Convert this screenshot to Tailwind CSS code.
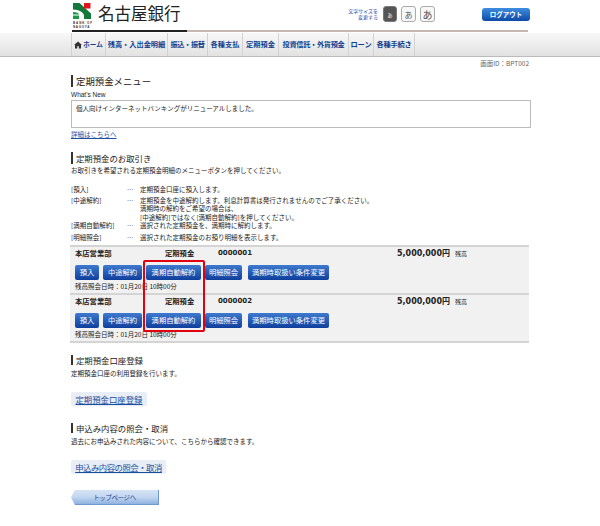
<!DOCTYPE html>
<html lang="ja"><head><meta charset="utf-8">
<script src="https://cdn.jsdelivr.net/npm/@tailwindcss/browser@4"></script>
</head>
<body class="bg-white w-[600px] h-[526px] overflow-hidden font-['Noto_Sans_CJK_JP','Noto_Sans',sans-serif] text-[6.5px] leading-[9px] text-[#222]">
<header class="h-[33px] px-[72px] relative">
  <div class="flex items-start h-[30px]">
    <svg width="19" height="26" viewBox="0 0 19 26" class="mt-[3px] ml-[1px] shrink-0">
      <path d="M0 0h6.5L18 10.5V16h-7v-3.5C10 8.5 6 7 0 6.5z" fill="#12793a"/>
      <path d="M0 9c3 0 5 .7 6 2v5H0z" fill="#1a9a48"/>
      <rect x="0" y="11.5" width="6" height="1" fill="#fff"/>
      <rect x="11" y="0" width="6.5" height="5.5" fill="#e2141f"/>
      <text x="0" y="21" font-size="3" letter-spacing=".9" fill="#333" font-family="Liberation Sans" font-weight="700">BANK OF</text>
      <text x="0" y="25" font-size="3" letter-spacing=".7" fill="#333" font-family="Liberation Sans" font-weight="700">NAGOYA</text>
    </svg>
    <span class="ml-[6px] mt-[3px] text-[16.5px] leading-[20px] text-[#222]">名古屋銀行</span>
    <div class="ml-auto flex items-center mt-[6px]">
      <span class="text-[5px] leading-[6px] text-right text-[#1f48a8] mr-[5px]">文字サイズを<br>変更する</span>
      <span class="w-[14px] h-[16px] rounded-[3px] bg-[#555] border border-[#777] text-white text-[5px] flex items-center justify-center">あ</span>
      <span class="w-[15px] h-[16px] rounded-[3px] ml-[4px] bg-[#f8f8f8] border border-[#aaa] text-[#555] text-[8px] flex items-center justify-center">あ</span>
      <span class="w-[15px] h-[16px] rounded-[3px] ml-[4px] bg-[#f8f8f8] border border-[#aaa] text-[#555] text-[10px] flex items-center justify-center">あ</span>
      <span class="ml-[47px] mr-[-2px] w-[48px] h-[13px] rounded-[3px] bg-gradient-to-b from-[#3f8de0] to-[#0c4aa8] text-white text-[6.5px] leading-[13px] text-center font-bold">ログアウト</span>
    </div>
  </div>
  <div class="absolute left-[72px] top-[30px] w-[456px] h-[2px] bg-[#c4b8b0]"><div class="w-[115px] h-[2px] bg-[#222]"></div></div>
</header>
<nav class="h-[24px] pl-[71px] bg-gradient-to-b from-[#f8f8f8] to-[#e2e2e2] border-b border-[#bbb] flex text-[7.2px] font-bold text-[#123f8e] leading-[23px]">
  <span class="w-[35px] border-x border-[#d2d2d2] flex items-center justify-center gap-[1px] text-[6.5px]"><svg width="8" height="8" viewBox="0 0 8 8"><path d="M4 .5L0 4h1v3.5h2.2V5.2h1.6v2.3H7V4h1z" fill="#333"/></svg>ホーム</span>
  <span class="w-[62px] border-r border-[#d2d2d2] text-center">残高・入出金明細</span>
  <span class="w-[40px] border-r border-[#d2d2d2] text-center tracking-[-0.4px]">振込・振替</span>
  <span class="w-[35px] border-r border-[#d2d2d2] text-center">各種支払</span>
  <span class="w-[36px] border-r border-[#d2d2d2] text-center">定期預金</span>
  <span class="w-[70px] border-r border-[#d2d2d2] text-center tracking-[-0.3px]">投資信託・外貨預金</span>
  <span class="w-[25px] border-r border-[#d2d2d2] text-center">ローン</span>
  <span class="w-[41px] border-r border-[#d2d2d2] text-center tracking-[-0.2px]">各種手続き</span>
</nav>
<p class="text-right pr-[71px] mt-[2px] text-[#666]">画面ID：BPT002</p>
<main class="pl-[71px] pr-[69px]">
  <h2 class="mt-[7px] border-l-2 border-[#333] pl-[3px] text-[9.4px] leading-[12px]">定期預金メニュー</h2>
  <p class="mt-[3px] font-['Liberation_Sans']">What's New</p>
  <div class="mt-[1px] h-[28px] border border-[#bbb] px-[4px] pt-[3px]">個人向けインターネットバンキングがリニューアルしました。</div>
  <a class="block mt-[2px] underline text-[#1a4fa0]">詳細はこちらへ</a>
  <h2 class="mt-[13px] border-l-2 border-[#333] pl-[3px] text-[8.4px] leading-[12px]">定期預金のお取引き</h2>
  <p class="mt-[2px]">お取引きを希望される定期預金明細のメニューボタンを押してください。</p>
  <dl class="mt-[10px] grid grid-cols-[56px_13px_1fr] leading-[8.5px]">
    <dt class="mb-[2px]">[預入]</dt><dd>…</dd><dd>定期預金口座に預入します。</dd>
    <dt class="mb-[3px]">[中途解約]</dt><dd>…</dd><dd>定期預金を中途解約します。利息計算書は発行されませんのでご了承ください。<br>満期時の解約をご希望の場合は、<br>[中途解約]ではなく[満期自動解約]を押してください。</dd>
    <dt class="mb-[3px]">[満期自動解約]</dt><dd>…</dd><dd>選択された定期預金を、満期時に解約します。</dd>
    <dt>[明細照会]</dt><dd>…</dd><dd>選択された定期預金のお預り明細を表示します。</dd>
  </dl>
  <section class="mt-[4px] relative w-[459px] -ml-[1px] border-b-2 border-[#d4d4d4] box-content">
    <div class="h-[48px] bg-[#f1f1f1] border-t-2 border-[#d4d4d4] pl-[5px]">
      <div class="flex font-bold h-[12px] items-center text-[7.3px]"><span class="w-[90px]">本店営業部</span><span class="w-[53px]">定期預金</span><span class="w-[232px] font-['DejaVu_Sans','Noto_Sans_CJK_JP'] text-[7px] relative">0000001<span class="absolute right-0 text-[8px]">5,000,000円</span></span><span class="ml-[5px] font-normal text-[6px]">残高</span></div>
      <div class="flex mt-[6px] text-white text-[7.3px] leading-[15px]">
        <span class="w-[24px] h-[15px] rounded-[2px] bg-gradient-to-b from-[#3e7ad0] to-[#0f3f9c] text-center">預入</span>
        <span class="ml-[4px] w-[39px] h-[15px] rounded-[2px] bg-gradient-to-b from-[#3e7ad0] to-[#0f3f9c] text-center">中途解約</span>
        <span class="ml-[4px] w-[55px] h-[15px] rounded-[2px] bg-gradient-to-b from-[#3e7ad0] to-[#0f3f9c] text-center">満期自動解約</span>
        <span class="ml-[4px] w-[37px] h-[15px] rounded-[2px] bg-gradient-to-b from-[#3e7ad0] to-[#0f3f9c] text-center">明細照会</span>
        <span class="ml-[6px] w-[81px] h-[15px] rounded-[2px] bg-gradient-to-b from-[#3e7ad0] to-[#0f3f9c] text-center">満期時取扱い条件変更</span>
      </div>
      <p class="mt-[2px]">残高照会日時：01月20日 10時00分</p>
    </div>
    <div class="h-[48px] bg-[#f1f1f1] border-t-2 border-[#d4d4d4] pl-[5px]">
      <div class="flex font-bold h-[12px] items-center text-[7.3px]"><span class="w-[90px]">本店営業部</span><span class="w-[53px]">定期預金</span><span class="w-[232px] font-['DejaVu_Sans','Noto_Sans_CJK_JP'] text-[7px] relative">0000002<span class="absolute right-0 text-[8px]">5,000,000円</span></span><span class="ml-[5px] font-normal text-[6px]">残高</span></div>
      <div class="flex mt-[6px] text-white text-[7.3px] leading-[15px]">
        <span class="w-[24px] h-[15px] rounded-[2px] bg-gradient-to-b from-[#3e7ad0] to-[#0f3f9c] text-center">預入</span>
        <span class="ml-[4px] w-[39px] h-[15px] rounded-[2px] bg-gradient-to-b from-[#3e7ad0] to-[#0f3f9c] text-center">中途解約</span>
        <span class="ml-[4px] w-[55px] h-[15px] rounded-[2px] bg-gradient-to-b from-[#3e7ad0] to-[#0f3f9c] text-center">満期自動解約</span>
        <span class="ml-[4px] w-[37px] h-[15px] rounded-[2px] bg-gradient-to-b from-[#3e7ad0] to-[#0f3f9c] text-center">明細照会</span>
        <span class="ml-[6px] w-[81px] h-[15px] rounded-[2px] bg-gradient-to-b from-[#3e7ad0] to-[#0f3f9c] text-center">満期時取扱い条件変更</span>
      </div>
      <p class="mt-[2px]">残高照会日時：01月20日 10時00分</p>
    </div>
    <div class="absolute left-[73px] top-[15px] w-[62px] h-[72px] border-2 border-[#e00010] rounded-[2px]"></div>
  </section>
  <h2 class="mt-[12px] border-l-2 border-[#333] pl-[3px] text-[8.4px] leading-[10px]">定期預金口座登録</h2>
  <p class="mt-[4px]">定期預金口座の利用登録を行います。</p>
  <a class="mt-[14px] block w-[76px] h-[14px] rounded-[2px] bg-[#e9eef6] text-center leading-[14px] underline text-[#1a4fa0] text-[8.4px]">定期預金口座登録</a>
  <h2 class="mt-[17px] border-l-2 border-[#333] pl-[3px] text-[8.4px] leading-[10px]">申込み内容の照会・取消</h2>
  <p class="mt-[4px]">過去にお申込みされた内容について、こちらから確認できます。</p>
  <a class="mt-[14px] block w-[95px] h-[14px] rounded-[2px] bg-[#e9eef6] text-center leading-[14px] underline text-[#1a4fa0] text-[8.4px] tracking-[-0.5px]">申込み内容の照会・取消</a>
  <div class="mt-[16px] w-[88px] h-[15px] [clip-path:polygon(4px_0,100%_0,100%_100%,4px_100%,0_50%)] bg-gradient-to-b from-[#d5e3f5] via-[#c3d7f0] to-[#8fb1e0] border-b border-r border-[#6f97d2] text-center leading-[14px] text-[#173f88] text-[6.5px] tracking-[-0.4px]">トップページへ</div>
</main>
</body></html>
